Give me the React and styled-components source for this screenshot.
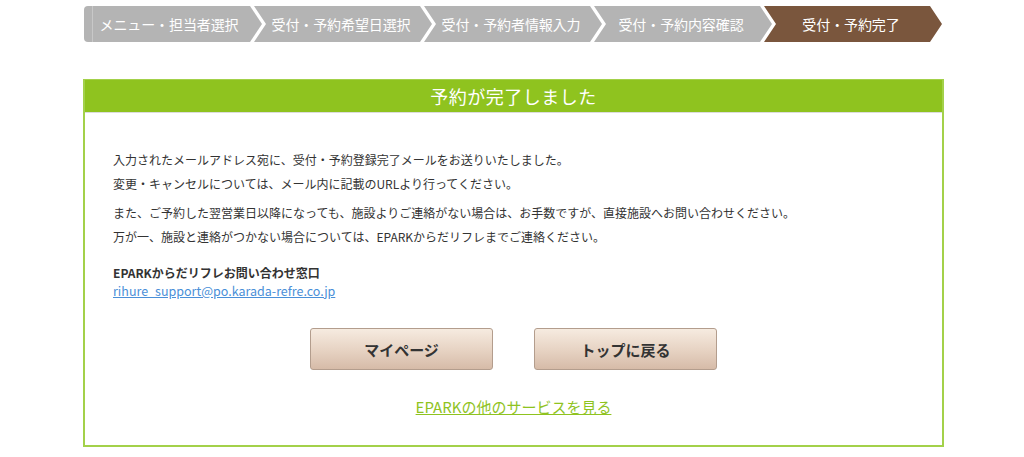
import React from "react";
import styled, { createGlobalStyle, css } from "styled-components";

const GlobalStyle = createGlobalStyle`
  html, body {
    margin: 0;
    padding: 0;
    background: #ffffff;
  }
  body {
    font-family: "Noto Sans CJK JP", "Noto Sans", sans-serif;
    color: #333333;
  }
`;

const steps = [
  "メニュー・担当者選択",
  "受付・予約希望日選択",
  "受付・予約者情報入力",
  "受付・予約内容確認",
  "受付・予約完了",
];

const App = () => {
  return (
    <>
      <GlobalStyle />
      <Page>
        <StepBar>
          {steps.map((label, i) => (
            <Step key={label} $first={i === 0} $active={i === steps.length - 1}>
              {label}
            </Step>
          ))}
        </StepBar>

        <Panel>
          <PanelTitle>予約が完了しました</PanelTitle>
          <PanelBody>
            <Paragraph>
              入力されたメールアドレス宛に、受付・予約登録完了メールをお送りいたしました。
              <br />
              変更・キャンセルについては、メール内に記載のURLより行ってください。
            </Paragraph>
            <Paragraph>
              また、ご予約した翌営業日以降になっても、施設よりご連絡がない場合は、お手数ですが、直接施設へお問い合わせください。
              <br />
              万が一、施設と連絡がつかない場合については、EPARKからだリフレまでご連絡ください。
            </Paragraph>

            <Contact>
              <ContactTitle>EPARKからだリフレお問い合わせ窓口</ContactTitle>
              <MailLink href="#">rihure_support@po.karada-refre.co.jp</MailLink>
            </Contact>

            <ButtonRow>
              <ActionButton type="button">マイページ</ActionButton>
              <ActionButton type="button">トップに戻る</ActionButton>
            </ButtonRow>

            <ServiceLink href="#">EPARKの他のサービスを見る</ServiceLink>
          </PanelBody>
        </Panel>
      </Page>
    </>
  );
};

const Page = styled.div`
  width: 861px;
  margin: 0 0 0 83px;
  padding-top: 6px;
`;

const StepBar = styled.div`
  display: flex;
  flex-direction: row;
  height: 36px;
  padding-left: 1px;
`;

const Step = styled.div`
  position: relative;
  flex: 0 0 178px;
  height: 36px;
  margin-left: -8px;
  padding: 0 4px 0 0;
  box-sizing: border-box;
  display: flex;
  align-items: center;
  justify-content: center;
  background: #b4b4b4;
  color: #ffffff;
  font-size: 14px;
  letter-spacing: -0.1px;
  clip-path: polygon(0 0, calc(100% - 12px) 0, 100% 50%, calc(100% - 12px) 100%, 0 100%, 12px 50%);

  ${(p) =>
    p.$first &&
    css`
      margin-left: 0;
      padding: 0 8px 0 0;
      border-radius: 4px 0 0 4px;
      clip-path: polygon(0 0, calc(100% - 12px) 0, 100% 50%, calc(100% - 12px) 100%, 0 100%);
      &::before {
        content: "";
        position: absolute;
        left: 8px;
        top: 0;
        bottom: 0;
        width: 1px;
        background: #c8c8c8;
      }
    `}

  ${(p) =>
    p.$active &&
    css`
      background: #7a563d;
    `}
`;

const Panel = styled.div`
  margin-top: 37px;
  border: 2px solid #a3d14a;
  border-top: 1px solid #a3d14a;
`;

const PanelTitle = styled.div`
  height: 32px;
  display: flex;
  align-items: center;
  justify-content: center;
  background: #8fc31f;
  border-bottom: 1px solid #dcdcdc;
  color: #ffffff;
  font-size: 18px;
  letter-spacing: 0.5px;
`;

const PanelBody = styled.div`
  display: flex;
  flex-direction: column;
  padding: 35px 28px 28px 28px;
`;

const Paragraph = styled.p`
  margin: 0 0 5px 0;
  font-size: 12px;
  line-height: 24px;
  color: #333333;
`;

const Contact = styled.div`
  display: flex;
  flex-direction: column;
  margin-top: 10px;
  font-size: 12px;
  line-height: 18px;
`;

const ContactTitle = styled.div`
  font-weight: bold;
  color: #333333;
`;

const MailLink = styled.a`
  align-self: flex-start;
  color: #4a8fd8;
  font-size: 12.5px;
  text-decoration: underline;
`;

const ButtonRow = styled.div`
  display: flex;
  justify-content: center;
  gap: 41px;
  margin-top: 28px;
`;

const ActionButton = styled.button`
  width: 183px;
  height: 42px;
  border: 1px solid #b39d8d;
  border-radius: 3px;
  background: linear-gradient(to bottom, #f6ebe0 0%, #e6d2c2 55%, #d6bba8 100%);
  font-family: "Noto Sans CJK JP", "Noto Sans", sans-serif;
  font-size: 15px;
  font-weight: bold;
  color: #333333;
  cursor: pointer;
  padding: 0;
`;

const ServiceLink = styled.a`
  align-self: center;
  margin-top: 27px;
  font-size: 15px;
  line-height: 20px;
  color: #8fc31f;
  text-decoration: underline;
`;

export default App;
